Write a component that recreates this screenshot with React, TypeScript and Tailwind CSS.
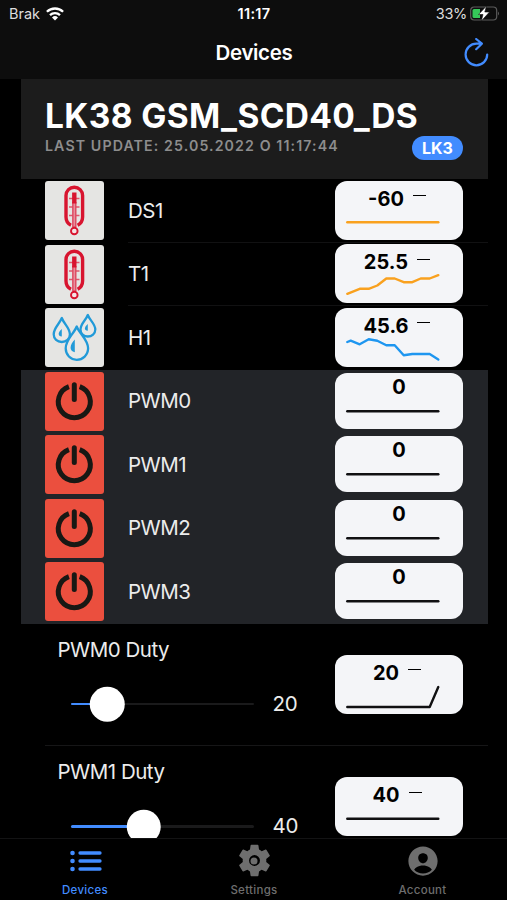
import type { ReactNode } from "react";
import { IoPersonCircle, IoSettingsSharp } from "react-icons/io5";

type Sensor = {
  name: string;
  icon: "thermometer" | "drops";
  value: string;
  color: string;
  points: string;
};

type Duty = {
  name: string;
  value: number;
  points: string;
};

const sensors: Sensor[] = [
  {
    name: "DS1",
    icon: "thermometer",
    value: "-60",
    color: "#f9a11f",
    points: "12.3,41.3 103.3,41.3",
  },
  {
    name: "T1",
    icon: "thermometer",
    value: "25.5",
    color: "#f9a11f",
    points:
      "12.3,49.8 24.7,44.8 33.7,44.8 42.3,41.5 51.3,34.5 59.7,34.5 68.7,38.2 77.3,38.2 85.7,34.5 94.7,34.5 103.3,31.2",
  },
  {
    name: "H1",
    icon: "drops",
    value: "45.6",
    color: "#1e96f0",
    points:
      "12.3,34 15.7,32.7 24.7,36.3 33.7,31.3 42.3,32.7 51.3,37.3 59.7,37.3 68.7,47.3 77.3,46 94.7,46 103.3,51.5",
  },
];

const outputs = ["PWM0", "PWM1", "PWM2", "PWM3"];

const duties: Duty[] = [
  { name: "PWM0 Duty", value: 20, points: "12.3,52 94.7,52 103.3,32" },
  { name: "PWM1 Duty", value: 40, points: "12.3,41.7 103.3,41.7" },
];

function Thermometer() {
  return (
    <svg viewBox="0 0 59 59" className="size-full" fill="none" stroke="#d8142f">
      <path
        d="M26 44.2C22.500 42.500 21 39.500 21 36V14.500a8.300 8.300 0 0 1 16.600 0V36c0 3.500-1.500 6.500-5 8.200"
        strokeWidth="3.400"
      />
      <path
        d="M24 17.500h10.500M24 26h10.500M24 34.500h10.500"
        stroke="#e0566c"
        strokeWidth="1.400"
      />
      <path d="M29.300 21v25" stroke="#de4a61" strokeWidth="4.400" />
      <path d="M29.300 22v23.500" stroke="#e88e9c" strokeWidth="1.500" />
      <path d="M29.300 11.500v11" strokeWidth="4.400" />
      <circle cx="29.300" cy="50" r="3.300" fill="#f4e3e5" strokeWidth="1.900" />
    </svg>
  );
}

function Drops() {
  return (
    <svg
      viewBox="0 0 59 59"
      className="size-full"
      fill="#e8e8e6"
      stroke="#219ad8"
      strokeWidth="2.300"
      strokeLinejoin="round"
    >
      <path d="M16.800 10C14.500 16 8.700 20 8.700 26.200c0 4.700 3.600 7.800 8.100 7.800s8.100-3.100 8.100-7.800C24.900 20 19 16 16.800 10Z" />
      <path d="M42.800 7C41 12.200 35.500 15.700 35.500 21.500c0 4.200 3.300 7 7.300 7s7.500-2.800 7.500-7c0-5.800-5.700-9.300-7.500-14.500Z" />
      <path d="M31.700 18.500C28.800 26 20.700 31.500 20.700 40.300c0 6.700 4.900 11.500 11 11.500s11.400-4.800 11.400-11.500C43.100 31.500 34.600 26 31.700 18.500Z" />
      <path
        d="M16.800 21v7.500c-4.300-.3-4-4.200 0-7.500ZM42.800 16v6.800c-4-.3-3.700-3.800 0-6.800ZM29.800 31.500v12.800c-5.900-1.500-5.200-7.300 0-12.800Z"
        fill="#219ad8"
        stroke="none"
      />
    </svg>
  );
}

function Power() {
  return (
    <svg
      viewBox="0 0 59 59"
      className="size-full"
      fill="none"
      stroke="#181814"
      strokeWidth="5"
    >
      <path d="M23.900 14.700a16 16 0 1 0 10.800 0" />
      <path d="M29.300 12.700v14.800" strokeLinecap="round" />
    </svg>
  );
}

function ValueCard({
  value,
  points,
  color,
  compact = false,
}: {
  value: string;
  points: string;
  color: string;
  compact?: boolean;
}) {
  return (
    <div
      className={`relative w-[128px] shrink-0 overflow-hidden rounded-[12px] bg-[#f4f5f8] text-black ${
        compact ? "h-[56px] pt-[4px]" : "h-[59px] pt-[8px]"
      }`}
    >
      <div className="flex h-5 items-center justify-center text-[20px] leading-5 font-bold">
        <span>{value}</span>
        {!compact && <span className="mr-1 mb-[6px] ml-[9px] h-px w-[13px] bg-black" />}
      </div>
      <svg viewBox="0 0 128 59" className="absolute top-0 left-0 h-[59px] w-[128px]" fill="none">
        <polyline
          points={points}
          stroke={color}
          strokeWidth="2.400"
          strokeLinecap="round"
          strokeLinejoin="round"
        />
      </svg>
    </div>
  );
}

function Row({
  name,
  icon,
  tile,
  divider,
  children,
}: {
  name: string;
  icon: ReactNode;
  tile: string;
  divider: boolean;
  children: ReactNode;
}) {
  return (
    <div className="flex h-[63.5px] pl-6">
      <div className={`mt-[2px] size-[59px] shrink-0 overflow-hidden rounded-[3px] ${tile}`}>
        {icon}
      </div>
      <div
        className={`ml-6 flex flex-1 items-center justify-between border-b pr-[25px] ${
          divider ? "border-[#111112]" : "border-transparent"
        }`}
      >
        <span className="pt-[2px] text-[20.500px] tracking-[-0.5px] text-[#ececec]">{name}</span>
        {children}
      </div>
    </div>
  );
}

function DutyRow({ duty }: { duty: Duty }) {
  return (
    <div className="pl-6">
      <div className="flex h-[122.5px] items-center justify-between border-b border-[#161617] pr-[25px] pl-[12.5px]">
        <div className="h-full pt-[11px]">
          <p className="text-[20.500px] leading-[30px] tracking-[-0.5px] text-[#ececec]">
            {duty.name}
          </p>
          <div className="mt-[22px] ml-[13px] flex h-[35px] items-center">
            <div className="relative h-[2.5px] w-[183px] rounded-full bg-[#1a1a1b]">
              <div
                className="h-full rounded-full bg-[#428cff]"
                style={{ width: `${duty.value}%` }}
              />
              <div
                className="absolute top-1/2 size-[34.5px] -translate-x-1/2 -translate-y-1/2 rounded-full bg-white"
                style={{ left: `${duty.value}%` }}
              />
            </div>
            <span className="ml-[19px] text-[20.500px] tracking-[-0.3px] text-[#ececec]">
              {duty.value}
            </span>
          </div>
        </div>
        <ValueCard value={String(duty.value)} points={duty.points} color="#101012" />
      </div>
    </div>
  );
}

function TopBar() {
  return (
    <div className="h-[79px] shrink-0 bg-[#0d0d0d] text-white">
      <div className="grid h-[27px] grid-cols-3 items-center pr-[7px] pl-[9px] text-[14.5px] text-[#dedede]">
        <div className="flex items-center gap-[6px]">
          <span>Brak</span>
          <svg viewBox="0 0 18 14" className="h-[14px] w-[18px]" fill="none" stroke="#fff">
            <path d="M.9 4.800a11.600 11.600 0 0 1 16.200 0M4 8.200a7.200 7.200 0 0 1 10 0" strokeWidth="2.300" />
            <path d="M6 10.500a4.300 4.300 0 0 1 6 0l-3 3Z" fill="#fff" stroke="none" />
          </svg>
        </div>
        <span className="pr-px text-center font-semibold tracking-[0.3px] text-white">11:17</span>
        <div className="flex items-center justify-end gap-[3px]">
          <span className="tracking-[-0.3px]">33%</span>
          <svg viewBox="0 0 30 15" className="h-[15px] w-[30px]">
            <rect x=".7" y="1" width="26" height="13" rx="3.500" fill="none" stroke="#5c5c5c" strokeWidth="1.200" />
            <path d="M4 3h6v9H4a1.500 1.500 0 0 1-1.500-1.500v-6A1.500 1.500 0 0 1 4 3Z" fill="#35c759" />
            <path
              d="M16.500 0 8.500 8.500H13L11.300 15l8.200-9h-4.700Z"
              fill="#fff"
              stroke="#0d0d0d"
              strokeWidth=".6"
            />
            <path d="M28 5.500q2 2 0 4Z" fill="#5c5c5c" />
          </svg>
        </div>
      </div>
      <div className="flex h-[52px] items-center px-[18px]">
        <span className="w-[26px]" />
        <h1 className="flex-1 pl-px text-center text-[20.500px] font-semibold tracking-[-0.35px]">
          Devices
        </h1>
        <svg
          viewBox="0 0 26 30"
          className="h-[30px] w-[26px]"
          fill="none"
          stroke="#428cff"
          strokeWidth="2.200"
          strokeLinecap="round"
          strokeLinejoin="round"
        >
          <path d="M24.200 16.500a10.800 10.800 0 1 1-10.800-10.800h5.500M13.200 1l5.700 4.700-5.700 5.500" />
        </svg>
      </div>
    </div>
  );
}

function TabBar() {
  return (
    <nav className="grid h-[62px] shrink-0 grid-cols-3 border-t border-[#131314] bg-black text-center text-[11.500px] font-medium tracking-[0.3px] text-[#6e6e6e]">
      <div className="flex flex-col items-center pt-[4px] pl-px text-[#428cff]">
        <svg viewBox="0 0 34 34" className="size-[34px]" stroke="currentColor" strokeLinecap="round">
          <path d="M12 10h20M12 18h20M12 26h20" strokeWidth="3.300" />
          <path d="M4.500 10h.01M4.500 18h.01M4.500 26h.01" strokeWidth="4.600" />
        </svg>
        <span className="mt-[5px] leading-4">Devices</span>
      </div>
      <div className="flex flex-col items-center pt-[4px] pl-px">
        <div className="relative">
          <IoSettingsSharp className="size-[35px]" />
          <span className="absolute top-1/2 left-1/2 size-[7px] -translate-x-1/2 -translate-y-1/2 rounded-full bg-[#6e6e6e]" />
        </div>
        <span className="mt-[4px] leading-4">Settings</span>
      </div>
      <div className="flex flex-col items-center pt-[4px]">
        <IoPersonCircle className="size-[36px]" />
        <span className="mt-[3px] leading-4">Account</span>
      </div>
    </nav>
  );
}

export default function App() {
  return (
    <div className="flex h-[900px] w-[507px] flex-col overflow-hidden bg-black font-['Inter',sans-serif]">
      <TopBar />
      <main className="min-h-0 flex-1 overflow-hidden pr-[19px] pl-[21px]">
        <header className="h-[100px] bg-[#1c1c1c] pt-[17px] pr-[25px] pl-6">
          <h2 className="text-[33.500px] leading-10 font-bold tracking-[0.35px] whitespace-nowrap text-white">
            LK38 GSM_SCD40_DS
          </h2>
          <div className="flex items-start justify-between">
            <p className="text-[14.200px] leading-5 font-semibold tracking-[1.1px] whitespace-nowrap text-[#8d8d8d]">
              LAST UPDATE: 25.05.2022 O 11:17:44
            </p>
            <span className="flex h-6 w-[51px] items-center justify-center rounded-full bg-[#428cff] text-[16px] font-bold text-white">
              LK3
            </span>
          </div>
        </header>

        {sensors.map((sensor, i) => (
          <Row
            key={sensor.name}
            name={sensor.name}
            icon={sensor.icon === "drops" ? <Drops /> : <Thermometer />}
            tile="bg-[#e5e5e3]"
            divider={i < sensors.length - 1}
          >
            <ValueCard value={sensor.value} points={sensor.points} color={sensor.color} />
          </Row>
        ))}

        <section className="bg-[#222428]">
          {outputs.map((name) => (
            <Row key={name} name={name} icon={<Power />} tile="bg-[#eb4f3e]" divider={false}>
              <ValueCard value="0" points="12.3,38.3 103.3,38.3" color="#101012" compact />
            </Row>
          ))}
        </section>

        {duties.map((duty) => (
          <DutyRow key={duty.name} duty={duty} />
        ))}
      </main>
      <TabBar />
    </div>
  );
}
